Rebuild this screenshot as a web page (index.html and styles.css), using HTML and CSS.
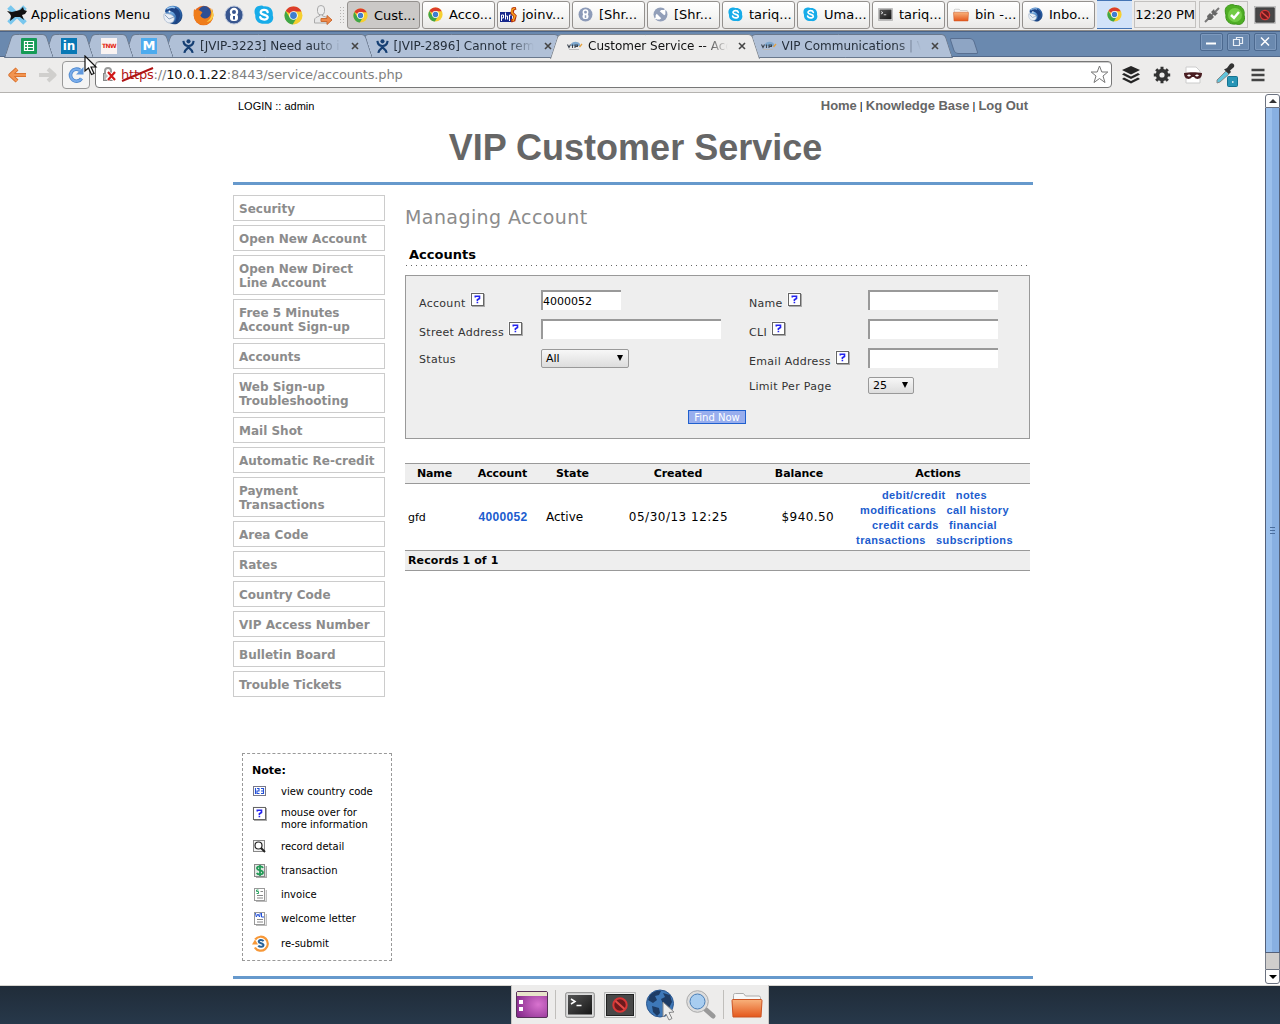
FILE: index.html
```html
<!DOCTYPE html>
<html lang="en">
<head>
<meta charset="utf-8">
<title>Customer Service -- Accounts</title>
<link rel="stylesheet" href="styles.css">
</head>
<body>
<svg class="defs" width="0" height="0" aria-hidden="true">
  <defs>
    <radialGradient id="blueBall" cx=".4" cy=".3" r=".8"><stop offset="0" stop-color="#7fb6ea"/><stop offset=".6" stop-color="#2a62a8"/><stop offset="1" stop-color="#173a70"/></radialGradient>
    <linearGradient id="orangeG" x1="0" y1="0" x2="0" y2="1"><stop offset="0" stop-color="#f8b27c"/><stop offset="1" stop-color="#e4571c"/></linearGradient>
    <radialGradient id="purpleG" cx=".7" cy=".5" r=".8"><stop offset="0" stop-color="#d873cf"/><stop offset="1" stop-color="#832789"/></radialGradient>
    <linearGradient id="darkG" x1="0" y1="0" x2="1" y2="1"><stop offset="0" stop-color="#555"/><stop offset="1" stop-color="#161616"/></linearGradient>
  </defs>
  <symbol id="chrome" viewBox="0 0 18 18">
    <circle cx="9" cy="9" r="8.5" fill="#f6cf2f"/>
    <path d="M9 9 1.6 4.8A8.5 8.5 0 0 1 16.5 5.2H9Z" fill="#dc3d2c"/>
    <path d="M1.6 4.8A8.5 8.5 0 0 0 8.2 17.5L11.8 11.5 9 9 5.5 11Z" fill="#3fa648"/>
    <circle cx="9" cy="9" r="4.1" fill="#fff"/><circle cx="9" cy="9" r="3.2" fill="#3f7ed0"/>
  </symbol>
  <symbol id="bird" viewBox="0 0 20 20">
    <path d="M2 5C5 0 13-1 17 4c4 5 3 12-3 15-4 1-8 0-10-4Z" fill="url(#blueBall)"/>
    <path d="M9 2c5 0 9 4 8 9-1 4-3 7-6 8 3-4 3-8 0-11-2-2-5-2-9-1 1-3 4-5 7-5Z" fill="#1d4283"/>
    <path d="M1 9c3-1 8 0 10 3 1 3-1 6-4 6-4 0-7-4-6-9Z" fill="#e9eef5" stroke="#a3b4cb" stroke-width=".7"/><path d="m2 10 4 4 5-2" fill="none" stroke="#8fa5c3"/>
    <path d="M4 4c3-2 6-2 8-1" fill="none" stroke="#9cc9f3" stroke-width="1.300"/>
    <circle cx="6.500" cy="6.500" r="1" fill="#fff"/>
  </symbol>
  <symbol id="firefox" viewBox="0 0 20 20">
    <circle cx="10" cy="10" r="9.300" fill="#e8691c"/>
    <circle cx="11" cy="7" r="6" fill="#2d4f94"/>
    <path d="M1 4c2 1 3 1 5 1l3 2-2 3c2 4 7 4 10 0l1-7c3 7 1 14-6 16C4 20-1 13 1 4Z" fill="#ef7d1b"/>
    <path d="M16 3c3 4 2 10-3 13 4 0 6-3 6.500-6 0-3-1-5-3.500-7Z" fill="#f8ce45"/>
  </symbol>
  <symbol id="keyhole" viewBox="0 0 20 20">
    <circle cx="10" cy="10" r="9" fill="#38568f" stroke="#b8c4da"/>
    <circle cx="10" cy="7" r="3.100" fill="none" stroke="#fff" stroke-width="2.200"/><rect x="6" y="9" width="8" height="7" rx="3" fill="#fff"/><rect x="9" y="11" width="2" height="3.500" fill="#38568f"/>
  </symbol>
  <symbol id="greykey" viewBox="0 0 20 20">
    <circle cx="10" cy="10" r="9.300" fill="#8d9bb8"/>
    <circle cx="10" cy="7" r="2.900" fill="none" stroke="#fff" stroke-width="2"/><rect x="6" y="9" width="8" height="7" rx="3" fill="#fff"/><rect x="9" y="11" width="2" height="3.500" fill="#8d9bb8"/>
  </symbol>
  <symbol id="plugball" viewBox="0 0 20 20">
    <circle cx="10" cy="10" r="9.300" fill="#929fb9"/><path d="m3 16 4-4M13 7l4-4" stroke="#fff" stroke-width="1.800"/><path d="m5 9 6 6-2 1.500H5L3.500 14V11ZM9 5.500 11 4h4l1.500 1.500v4L15 11Z" fill="#fff"/>
  </symbol>
  <symbol id="skype" viewBox="0 0 20 20">
    <path d="M6 .8a5 5 0 0 1 4 .6c6-.5 9.500 3.600 8.700 8.800 2 5-2 9.500-7 8.500C5 19.500.8 15.500 1.300 10-.8 5.500 1.500 1 6 .8Z" fill="#17ace9"/>
    <path d="M13.700 7.200C13 4 6.600 4.200 6.700 7.300c.1 3.200 7 2 7 5 0 3-6.800 3-7.500-.2" fill="none" stroke="#fff" stroke-width="2.300" stroke-linecap="round"/>
  </symbol>
  <symbol id="terminal" viewBox="0 0 30 26">
    <rect x=".7" y=".7" width="28.600" height="24.600" rx="1.500" fill="#ddd" stroke="#888"/><rect x="3" y="3" width="24" height="19.500" fill="url(#darkG)"/><path d="m6 7 4 2.500L6 12M11.500 13.500h5" stroke="#fff" stroke-width="1.500" fill="none"/>
  </symbol>
  <symbol id="blocked" viewBox="0 0 32 26">
    <rect x=".7" y=".7" width="30.600" height="24.600" fill="#fff" stroke="#aaa"/><rect x="2.500" y="2.500" width="27" height="21" fill="#484848" stroke="#222"/>
    <circle cx="16" cy="13" r="6.700" fill="#6c1a1d" stroke="#d93636" stroke-width="2"/><path d="m11.500 9 9 8" stroke="#e34a46" stroke-width="2.200"/>
  </symbol>
  <symbol id="folder" viewBox="0 0 32 26">
    <path d="M2.500 10V3.500C2.500 2 3 1.500 4.500 1.500h8l2 2.500h14l1 1.500V10Z" fill="#f8f8f8" stroke="#aaa"/><path d="M1 8.500q0-1 1-1h28q1 0 1 1L30 25H2Z" fill="url(#orangeG)" stroke="#cc5424"/>
  </symbol>
  <symbol id="jira" viewBox="0 0 14 16">
    <circle cx="7" cy="3" r="2.200" fill="#163f73"/><path d="M1.500 2.500C2 7 5 8 7 8s5-1 5.500-5.500M2.500 15.500C3 11 8 10 9.500 6.500M11.500 15.500C11 11 6 10 4.500 6.500" fill="none" stroke="#163f73" stroke-width="2.300"/>
  </symbol>
  <symbol id="vip" viewBox="0 0 16 10">
    <path d="M4 3C6 0 11 0 13 3v2H4Z" fill="#7fa9cf"/><path d="m.5 3.500 1.500 3 1.500-3M5.500 3.500v3.500M8 7V4h2.500v1.500H8" fill="none" stroke="#3b444f" stroke-width="1.100"/><path d="m12.500 6 2.500-3" stroke="#e5a13f" stroke-width="1.300"/><path d="M2 8.500h10" stroke="#bbb"/>
  </symbol>
  <symbol id="help" viewBox="0 0 15 15">
    <rect width="14" height="14" fill="#f8f8f8"/><path d="M2 14.300h12.300V2" fill="none" stroke="#aaa" stroke-width="1.400"/>
    <rect x="1.500" y="1.500" width="12" height="12" fill="#fff" stroke="#666"/><path d="M5.300 5.600V4.300h4.200v2.200L7.400 7.700v1.200M7.400 9.700v1.600" fill="none" stroke="#2424ef" stroke-width="1.600"/>
  </symbol>
  <symbol id="close" viewBox="0 0 8 8"><path d="m1 1 6 6M7 1 1 7" stroke="#454545" stroke-width="1.600"/></symbol>
</svg>

<header class="panel">
  <div class="menu">
    <svg width="22" height="22" viewBox="0 0 22 22"><path d="m3 3 16 16M19 3 3 19" stroke="#79c7ee" stroke-width="5"/><path d="m1 7 5 1 8-2 3-3 1 3 3 1-2 3-3 1 2 5-4-3H9l-5 4 1-5-1-2Z" fill="#111"/></svg>
    <span>Applications Menu</span>
  </div>
  <div class="launchers">
    <svg width="20" height="20"><use href="#bird"/></svg>
    <svg width="21" height="21"><use href="#firefox"/></svg>
    <svg width="20" height="20"><use href="#keyhole"/></svg>
    <svg width="20" height="20"><use href="#skype"/></svg>
    <svg width="19" height="19"><use href="#chrome"/></svg>
    <svg width="20" height="20" viewBox="0 0 20 20"><path d="M1.500 18v-3c0-2 2-3 5-4V9h3v2c4 1 6 2 6 4v3Z" fill="#e8e8e8" stroke="#aaa"/><rect x="4.500" y=".5" width="7" height="9.500" rx="3.500" fill="#eee" stroke="#aaa"/><path d="M8 13.500h6V10.500l5 4.500-5 4.500v-3H8Z" fill="#ef8848" stroke="#c96b33"/></svg>
  </div>
  <i class="grip"></i>
  <nav class="tasks">
    <div class="task on"><svg width="15" height="15"><use href="#chrome"/></svg>Cust...</div>
    <div class="task"><svg width="15" height="15"><use href="#chrome"/></svg>Acco...</div>
    <div class="task wide"><svg width="17" height="16" viewBox="0 0 17 16"><path d="M0 5h12v10H0Z" fill="#18298c"/><path d="M1.500 14V8h2v3h-2M5.500 5.500v7M5.500 9h2v3.500M9.500 14V8h2" stroke="#fff" fill="none"/><path d="m16 1-3 1-1 4 3 3-1 4-3 1" fill="none" stroke="#b5310f" stroke-width="3.200"/><path d="m15 1-3 2v3l3 3-2 5" fill="none" stroke="#f9a51b" stroke-width="1.500"/></svg>joinv...</div>
    <div class="task"><svg width="15" height="15"><use href="#greykey"/></svg>[Shr...</div>
    <div class="task"><svg width="15" height="15"><use href="#plugball"/></svg>[Shr...</div>
    <div class="task"><svg width="15" height="15"><use href="#skype"/></svg>tariq...</div>
    <div class="task"><svg width="15" height="15"><use href="#skype"/></svg>Uma...</div>
    <div class="task"><svg width="15" height="13"><use href="#terminal"/></svg>tariq...</div>
    <div class="task"><svg width="16" height="14"><use href="#folder"/></svg>bin -...</div>
    <div class="task"><svg width="15" height="15"><use href="#bird"/></svg>Inbo...</div>
  </nav>
  <div class="pager"><svg width="15" height="15"><use href="#chrome"/></svg></div>
  <div class="clock">12:20 PM</div>
  <div class="tray">
    <svg width="18" height="18" viewBox="0 0 18 18"><path d="M2 16 16 2" stroke="#777" stroke-width="2"/><path d="m4 10 3-3 4 4-3 3H5ZM8 6l3-3 1 3 3 1-3 3Z" fill="#666"/></svg>
    <svg width="22" height="22" viewBox="0 0 22 22"><path d="M6 1c2-1 4 0 5 .5C18 1 21 6 20 11c2 6-2 11-8 9C5 21 1 16 2 11 0 5 2 2 6 1Z" fill="#4fae25" stroke="#3b951a"/><circle cx="11" cy="11" r="7" fill="#72cc46"/><path d="m7 11 3 3 5-6" fill="none" stroke="#fff" stroke-width="2.500"/></svg>
  </div>
  <svg class="last" width="22" height="18" viewBox="0 0 32 26"><use href="#blocked"/></svg>
</header>

<div class="tabstrip">
  <div class="tab pin t1"><svg width="16" height="16"><rect width="16" height="16" rx="1" fill="#159b56"/><path d="M3.500 3.500h9v9h-9ZM3.500 6.500h9M3.500 9.500h9M6.500 3.500v9" fill="none" stroke="#fff" stroke-width="1.200"/></svg></div>
  <div class="tab pin t2"><div class="fav li">in</div></div>
  <div class="tab pin t3"><div class="fav tnw">TNW</div></div>
  <div class="tab pin t4"><div class="fav em">M</div></div>
  <div class="tab jr t5"><svg width="13" height="16"><use href="#jira"/></svg><span>[JVIP-3223] Need auto i</span><svg width="8" height="8"><use href="#close"/></svg></div>
  <div class="tab jr t6"><svg width="13" height="16"><use href="#jira"/></svg><span>[JVIP-2896] Cannot rem</span><svg width="8" height="8"><use href="#close"/></svg></div>
  <div class="tab active"><svg width="16" height="10"><use href="#vip"/></svg><span>Customer Service -- Acc</span><svg width="8" height="8"><use href="#close"/></svg></div>
  <div class="tab t8"><svg width="16" height="10"><use href="#vip"/></svg><span>VIP Communications | V</span><svg width="8" height="8"><use href="#close"/></svg></div>
  <i class="newtab"></i>
  <div class="wm">
    <b><svg width="20" height="15"><path d="M5 9.500h10" stroke="#fff" stroke-width="2"/></svg></b>
    <b><svg width="20" height="15"><path d="M5.500 5.500h6v6h-6ZM8.500 5V3.500h6v6h-3" fill="none" stroke="#e8eef6" stroke-width="1.200"/></svg></b>
    <b><svg width="20" height="15"><path d="m6 3.500 8 8M14 3.500l-8 8" stroke="#fff" stroke-width="1.500"/></svg></b>
  </div>
</div>

<div class="toolbar">
  <svg width="20" height="16" viewBox="0 0 20 16"><path d="M9 2 2.500 8 9 14M3 8h15" fill="none" stroke="#d36b29" stroke-width="4.200" stroke-linejoin="round"/><path d="M9 2 2.500 8 9 14M3 8h15" fill="none" stroke="#f29450" stroke-width="2.400"/></svg>
  <svg class="fwd" width="20" height="16" viewBox="0 0 20 16"><path d="m11 2 6.500 6-6.500 6M17 8H2" fill="none" stroke="#d0cfcd" stroke-width="4" stroke-linejoin="round"/></svg>
  <div class="reload"><svg width="18" height="18" viewBox="0 0 18 18"><path d="M14.500 12.500A6 6 0 1 1 13 4.300" fill="none" stroke="#4a85cd" stroke-width="3.600"/><path d="M14.500 12.500A6 6 0 1 1 13 4.300" fill="none" stroke="#78aceb" stroke-width="2"/><path d="M16.500 1v7.500H9Z" fill="#5f98dd"/></svg></div>
  <div class="url">
    <svg width="16" height="17" viewBox="0 0 16 17"><path d="M3 8V5c0-4 6-4 6 0v3" fill="none" stroke="#999" stroke-width="2"/><rect x="1.500" y="7.500" width="9" height="7" fill="#bbb" stroke="#888"/><path d="m5 6 8 8M13 6l-8 8" stroke="#fff" stroke-width="4"/><path d="m6 6 7 8M13 6l-7 8" stroke="#d01818" stroke-width="2.200"/></svg>
    <span class="addr"><span class="scheme">https<svg class="slash" width="33" height="16"><path d="M1 14 32 1" stroke="#b01515" stroke-width="2"/></svg></span>://<em>10.0.1.22</em>:8443/service/accounts.php</span>
    <svg width="19" height="19" viewBox="0 0 19 19"><path d="m9.500 1 2.300 6h6l-4.800 4 2 6.500-5.500-4-5.500 4 2-6.500-4.800-4h6Z" fill="#fff" stroke="#777"/></svg>
  </div>
  <div class="exts">
    <svg width="18" height="18" viewBox="0 0 18 18" fill="#252525"><path d="m9 0 9 4-9 4.500L0 4ZM2 7l7 3.500L16 7l2 1.500L9 13 0 8.500ZM2 11.500 9 15l7-3.500 2 1.500-9 4.500L0 13Z"/></svg>
    <svg width="18" height="18" viewBox="0 0 18 18"><circle cx="9" cy="9" r="4.400" fill="none" stroke="#333" stroke-width="3.600"/><path d="M9 .8v3M9 14.200v3M.8 9h3M14.200 9h3M3.200 3.200l2 2M12.800 12.800l2 2M14.800 3.200l-2 2M5.200 12.800l-2 2" stroke="#333" stroke-width="3"/></svg>
    <svg width="18" height="18" viewBox="0 0 18 18"><path d="M2 1h10l4 4v12H2Z" fill="#fff" stroke="#ccc"/><path d="M0 7c5-1 13-1 18 0 0 7-6 7-8 4H8C6 14 0 14 0 7Z" fill="#4a1e22"/><path d="M3 9.500q2-2 4 0-2 2-4 0M11 9.500q2-2 4 0-2 2-4 0" fill="#fff"/></svg>
    <svg width="23" height="24" viewBox="0 0 23 24"><path d="m2 17 9-9 3 3-9 8-3 1Z" fill="#61c4dc" stroke="#888"/><path d="m10 6 2-1 3-4q2-1.500 3.500 0t0 3.500L15 7.500 16 9l-2 2-5-4.500Z" fill="#333"/><rect x="12.500" y="13.500" width="10" height="10" rx="1" fill="#2795b6" stroke="#157391"/><path d="M17 19h1.500" stroke="#fff" stroke-width="1.500"/></svg>
    <svg width="14" height="14"><path d="M.5 2h13M.5 7h13M.5 12h13" stroke="#444" stroke-width="2.600"/></svg>
  </div>
</div>

<div class="viewport">
  <div class="page">
    <div class="top"><span class="login">LOGIN :: admin</span><span class="links"><a>Home</a> | <a>Knowledge Base</a> | <a>Log Out</a></span></div>
    <h1>VIP Customer Service</h1>
    <div class="columns">
      <aside>
        <ul class="nav">
          <li>Security</li><li>Open New Account</li><li>Open New Direct<br>Line Account</li><li>Free 5 Minutes<br>Account Sign-up</li><li>Accounts</li><li>Web Sign-up<br>Troubleshooting</li><li>Mail Shot</li><li>Automatic Re-credit</li><li>Payment<br>Transactions</li><li>Area Code</li><li>Rates</li><li>Country Code</li><li>VIP Access Number</li><li>Bulletin Board</li><li>Trouble Tickets</li>
        </ul>
        <div class="note">
          <strong>Note:</strong>
          <div class="nrow r1"><svg width="14" height="10" viewBox="0 0 14 10"><rect x=".5" y=".5" width="12" height="9" fill="#fff" stroke="#778"/><path d="M2.500 2v6M4 2.500h2v2.500H4v2.500h2.500M8 2.500h2.500v5H8M8 5h2" fill="none" stroke="#2350d8" stroke-width="1.100"/></svg>view country code</div>
          <div class="nrow r2"><svg width="15" height="15"><use href="#help"/></svg>mouse over for<br>more information</div>
          <div class="nrow"><svg width="13" height="13" viewBox="0 0 13 13"><rect x=".5" y=".5" width="11" height="11" fill="#f3f3f3" stroke="#888"/><circle cx="5.500" cy="5.500" r="3.500" fill="#fff" stroke="#222" stroke-width="1.200"/><path d="m8 8 4 4" stroke="#222" stroke-width="2"/></svg>record detail</div>
          <div class="nrow"><svg width="14" height="14" viewBox="0 0 14 14"><path d="M3 13.300h10.300V2" stroke="#aaa" stroke-width="1.500" fill="none"/><rect x="1.500" y=".5" width="10" height="12" fill="#e4e8e5" stroke="#888"/><path d="M10 4C9 1.500 3.500 2 4 4.500s6 1.500 6 4-5 2.500-6.300.5M7 1v11" fill="none" stroke="#249b58" stroke-width="1.800"/></svg>transaction</div>
          <div class="nrow"><svg width="14" height="14" viewBox="0 0 14 14"><path d="M3 13.300h10.300V2" stroke="#bbb" stroke-width="1.200" fill="none"/><rect x="1.500" y=".5" width="10" height="12" fill="#fff" stroke="#999"/><path d="M5.500 2H3.500v1.500h2v2h-2" fill="none" stroke="#30a565"/><path d="M7.500 3.500H10M4 7.500h6M4 10h6" stroke="#888"/></svg>invoice</div>
          <div class="nrow"><svg width="14" height="14" viewBox="0 0 14 14"><path d="M3 13.300h10.300V2" stroke="#bbb" stroke-width="1.200" fill="none"/><rect x="1.500" y=".5" width="10" height="12" fill="#fff" stroke="#999"/><path d="m2.500 1 .8 4L5 2l1.500 3 .8-4M8.500 1v4H11" fill="none" stroke="#2350d8"/><path d="M4 7.500h6M4 10h6" stroke="#888"/></svg>welcome letter</div>
          <div class="nrow last-row"><svg width="17" height="17" viewBox="0 0 17 17"><path d="M3.200 4.500a7 7 0 1 1-.3 8" fill="none" stroke="#f79838" stroke-width="2.200"/><path d="M0 9.500 3 4.500l3 5Z" fill="#f79838"/><path d="M11.500 6.200C10.500 4.500 6.500 4.600 6.700 6.700c.2 2 4.800 1 4.800 3.400 0 2.200-4.200 2-5.200.5" fill="none" stroke="#286299" stroke-width="2"/></svg>re-submit</div>
        </div>
      </aside>
      <main>
        <h2>Managing Account</h2>
        <h3>Accounts</h3>
        <form class="search">
          <div class="fields">
            <label>Account <svg width="15" height="15"><use href="#help"/></svg></label><input class="w80" value="4000052">
            <label>Name <svg width="15" height="15"><use href="#help"/></svg></label><input class="w130">
            <label>Street Address <svg width="15" height="15"><use href="#help"/></svg></label><input class="w180">
            <label>CLI <svg width="15" height="15"><use href="#help"/></svg></label><input class="w130">
            <label class="plain">Status</label><div class="sel s1"><span>All</span><i></i></div>
            <label>Email Address <svg width="15" height="15"><use href="#help"/></svg></label><input class="w130">
            <label class="plain c3">Limit Per Page</label><div class="sel s2"><span>25</span><i></i></div>
          </div>
          <button type="button">Find Now</button>
        </form>
        <table>
          <colgroup><col class="c-name"><col class="c-acct"><col class="c-state"><col class="c-date"><col class="c-bal"><col></colgroup>
          <thead><tr><th>Name</th><th>Account</th><th>State</th><th>Created</th><th>Balance</th><th>Actions</th></tr></thead>
          <tbody><tr><td class="small">gfd</td><td class="acct"><a>4000052</a></td><td class="state">Active</td><td class="date">05/30/13 12:25</td><td class="bal">$940.50</td><td class="actions">debit/credit &nbsp; notes<br>modifications &nbsp; call history<br>credit cards &nbsp; financial<br>transactions &nbsp; subscriptions</td></tr></tbody>
          <tfoot><tr><td colspan="6">Records 1 of 1</td></tr></tfoot>
        </table>
      </main>
    </div>
  </div>
  <div class="scroll"><i class="btn up"></i><i class="thumb"></i><i class="trough"></i><i class="btn down"></i></div>
</div>

<footer class="desktop">
  <div class="dock">
    <svg width="32" height="27" viewBox="0 0 32 27"><rect x=".5" y=".5" width="31" height="26" rx="1.500" fill="url(#purpleG)" stroke="#573158"/><path d="M1 1h30v4H1Z" fill="#e8e4cb"/><path d="M3 9h4v4H3ZM3 16h4v4H3Z" fill="#fff"/></svg>
    <i></i>
    <svg width="30" height="26"><use href="#terminal"/></svg>
    <svg width="32" height="26"><use href="#blocked"/></svg>
    <svg width="32" height="32" viewBox="0 0 32 32"><circle cx="15" cy="14.500" r="13.500" fill="#3e78b8" stroke="#2a568f"/><path d="M5 6c4-4 8-5 11-4l-2 4-4 1 2 4-4 3-5-3ZM18 4l7 2 2 7-3 6-6-4-2-5 4-2ZM7 17l7 2 1 5-3 3-4-4Z" fill="#1e3c65"/><path d="m18 13 11 10-5 .5 3 6-3 1.500-3-6-3 3Z" fill="#eee" stroke="#888"/></svg>
    <svg width="30" height="30" viewBox="0 0 30 30"><path d="m18 18 9 8" stroke="#999" stroke-width="5" stroke-linecap="round"/><circle cx="11.500" cy="11.500" r="9" fill="#a8cdf0" stroke="#ddd" stroke-width="3.500"/><circle cx="11.500" cy="11.500" r="10.800" fill="none" stroke="#aaa"/><circle cx="11.500" cy="11.500" r="7.500" fill="none" stroke="#467db8"/></svg>
    <i></i>
    <svg class="fold" width="32" height="26"><use href="#folder"/></svg>
  </div>
</footer>
<svg class="cursor" width="14" height="21" viewBox="0 0 14 21"><path d="M1 1v15l3.500-3 3 6.500 2.500-1-3-6.500h5Z" fill="#fff" stroke="#111" stroke-width="1.200"/></svg>
</body>
</html>
```
FILE: styles.css
```css
* { box-sizing: border-box; }
body { margin: 0; width: 1280px; height: 1024px; overflow: hidden; display: flex; flex-direction: column; background: #fff; font-family: "DejaVu Sans", Verdana, sans-serif; color: #000; }
svg { display: block; flex: none; }
.defs { position: absolute; }

.panel { height: 31px; flex: none; display: flex; align-items: flex-start; background: #edeceb; border-bottom: 1px solid #8e8b88; font-size: 13px; }
.menu { display: flex; align-items: center; gap: 3px; width: 162px; height: 29px; padding-left: 6px; white-space: nowrap; }
.launchers { display: flex; align-items: center; justify-content: space-between; width: 171px; height: 30px; padding-left: 1px; }
.grip { width: 6px; height: 18px; margin: 6px 2px 0 6px; background: radial-gradient(circle, #b5b3b1 1px, transparent 1px) 0 0 / 3px 3px; }
.tasks { display: flex; gap: 2px; }
.task { width: 73px; height: 28px; margin-top: 1px; display: flex; align-items: center; gap: 6px; padding-left: 5px; padding-bottom: 1px; border: 1px solid #94918e; border-radius: 3px; background: linear-gradient(#fff, #f6f6f5 50%, #e9e8e6); white-space: nowrap; overflow: hidden; }
.task.wide { gap: 5px; padding-left: 2px; }
.task.on { background: #cbc9c7; padding-bottom: 0; }
.pager { width: 35px; height: 29px; margin-left: 2px; display: flex; align-items: center; justify-content: center; background: #d2e3f9; border: solid #4575b5; border-width: 1px 0; }
.clock { width: 62px; height: 27px; margin: 1px 0 0 2px; border: 1px solid #c3c1bf; line-height: 25px; text-align: center; white-space: nowrap; letter-spacing: -.15px; }
.tray { width: 49px; height: 27px; margin: 1px 0 0 3px; border: 1px solid #c3c1bf; display: flex; align-items: center; gap: 3px; padding-left: 3px; }
.last { margin: 6px 0 0 6px; }

.tabstrip { height: 26px; flex: none; display: flex; align-items: flex-start; padding: 2px 5px 0 4px; background: #6a89af; border-top: 1px solid #4a6489; position: relative; box-shadow: inset 0 -1px #53698a; font-size: 12px; color: #26303c; z-index: 1; }
.tab { position: relative; isolation: isolate; width: 209.500px; height: 24px; margin-right: -16px; padding: 0 14px 0 17px; display: flex; align-items: center; flex: none; }
.tab::before, .tab::after { content: ""; position: absolute; z-index: -1; top: 0; bottom: 0; background: #b0c0d7; border: 1px solid #69788d; }
.tab::before { left: 4px; right: calc(50% - 6px); border-right: 0; border-radius: 4px 0 0 0; transform: skewX(-18deg); }
.tab::after { left: calc(50% - 6px); right: 4px; border-left: 0; border-radius: 0 4px 0 0; transform: skewX(18deg); }
.jr { padding-left: 19px; }
.pin { width: 50px; margin-right: -10px; padding: 0; justify-content: center; }
.t1 { z-index: 9; } .t2 { z-index: 8; } .t3 { z-index: 7; } .t4 { z-index: 6; margin-right: -11px; } .t5 { z-index: 5; } .t6 { z-index: 4; } .t8 { z-index: 2; }
.active { z-index: 10; height: 25px; color: #111; padding-bottom: 1px; }
.tab.active::before, .tab.active::after { background: #edeceb; border-bottom: 0; border-color: #7f8791; }
.tab span { flex: 1; overflow: hidden; white-space: nowrap; margin-left: 5px; margin-right: 10px; font-size: 12px; -webkit-mask-image: linear-gradient(90deg, #000 82%, transparent); mask-image: linear-gradient(90deg, #000 82%, transparent); }
.fav { width: 16px; height: 16px; line-height: 16px; text-align: center; color: #fff; font-weight: bold; }
.li { background: #0878b5; font-size: 12px; }
.tnw { background: #f9f3f2; color: #e32615; font-size: 6px; letter-spacing: -.5px; }
.em { background: #4cabee; font-size: 13px; }
.newtab { width: 24px; height: 16px; margin: 4px 0 0 15px; background: #8ea5c4; border: 1px solid #586f91; border-radius: 2px 4px 2px 4px; transform: skewX(18deg); }
.wm { display: flex; gap: 4px; margin: -1px -2px 0 auto; }
.wm b { width: 23px; height: 18px; border: 1px solid #4c698f; border-radius: 2px; box-shadow: inset 0 0 0 1px #7d99bd; }

.toolbar { height: 36px; flex: none; display: flex; align-items: center; padding: 0 0 0 8px; background: #edeceb; border-bottom: 1px solid #b5b3b0; }
.fwd { margin-left: 9px; }
.reload { width: 28px; height: 28px; margin-left: 5px; display: flex; align-items: center; justify-content: center; border: 1px solid #999; border-radius: 4px; background: #f4f4f4; }
.url { width: 1017px; height: 27px; margin-left: 5px; display: flex; align-items: center; border: 1px solid #777; border-radius: 4px; background: #fff; box-shadow: inset 0 1px #ccc; padding: 0 2px 0 6px; }
.addr { margin-left: 3px; flex: 1; font-size: 13px; letter-spacing: -.17px; color: #808080; white-space: nowrap; }
.addr em { font-style: normal; color: #111; }
.scheme { position: relative; color: #b01515; }
.slash { position: absolute; left: 0; top: 0; }
.exts { display: flex; align-items: center; margin-left: 10px; gap: 13px; }

.viewport { height: 892px; flex: none; display: flex; justify-content: flex-end; background: #fff; }
.page { width: 800px; margin-right: 232px; height: 886px; border-bottom: 3px solid #69c; }
.top { height: 28px; padding: 5px 5px 0; display: flex; justify-content: space-between; font: 11px/16px "Liberation Sans", Arial, sans-serif; }
.links a { font-weight: bold; font-size: 13px; color: #666; letter-spacing: -.03px; }
h1 { margin: 0; height: 64px; padding-left: 5px; border-bottom: 3px solid #69c; text-align: center; font: bold 36px/53px "Liberation Sans", Arial, sans-serif; color: #666; }
.columns { display: flex; padding-top: 10px; }
aside { width: 172px; }
.nav { list-style: none; margin: 0; padding: 0; width: 152px; display: flex; flex-direction: column; gap: 4px; }
.nav li { border: 1px solid #ccc; padding: 6px 5px 4px; font: bold 12px/14px "DejaVu Sans", Verdana, sans-serif; color: #8c8c8c; white-space: nowrap; }
.note { width: 150px; height: 208px; margin: 56px 0 0 9px; border: 1px dashed #999; padding: 10px 0 0 9px; font-size: 10px; line-height: 12px; }
.note strong { display: block; font-size: 11px; line-height: 14px; }
.nrow { position: relative; height: 24px; padding: 6px 0 0 29px; white-space: nowrap; }
.nrow svg { position: absolute; left: 1px; top: 5px; }
.nrow.r1 { height: 21px; padding-top: 8px; }
.nrow.r1 svg { top: 8px; }
.nrow.r2 { height: 36px; padding-top: 8px; }
.nrow.r2 svg { top: 7px; left: 0; }
.last-row { padding-top: 7px; }
.last-row svg { left: 0; top: 4px; }

main { width: 625px; }
h2 { margin: 10px 0 0; font-size: 19px; font-weight: normal; line-height: 24px; color: #8c8c8c; letter-spacing: .42px; }
h3 { margin: 17px 0 0; padding-left: 4px; height: 20px; font-size: 13px; line-height: 17px; background: repeating-linear-gradient(90deg, #666 0 1px, transparent 1px 5px) 1px 100% / 100% 1px no-repeat; }
.search { height: 164px; margin-top: 9px; padding: 14px 13px 0; background: #eee; border: 1px solid #999; }
.fields { display: grid; grid-template-columns: 122px 208px 119px 148px; grid-template-rows: 21px 21px 21px 17px; row-gap: 8px; }
label { display: flex; gap: 4px; font-size: 11px; line-height: 27px; letter-spacing: .3px; color: #333; white-space: nowrap; height: 21px; }
label svg { margin-top: 2px; }
label.plain { line-height: 23px; }
label.c3 { grid-column: 3; line-height: 19px; height: 17px; }
.fields input { height: 20px; padding: 0; border: 0 solid #999; border-width: 2px 0 0 2px; background: #fff; font: 11px "DejaVu Sans", sans-serif; }
.w80 { width: 80px; } .w130 { width: 130px; } .w180 { width: 180px; }
.sel { display: flex; align-items: center; justify-content: space-between; padding: 0 5px 0 4px; border: 1px solid #999; border-radius: 2px; background: linear-gradient(#f7f7f7, #ddd); font-size: 11px; }
.s1 { width: 88px; height: 19px; margin-top: 1px; }
.s2 { width: 46px; height: 17px; }
.sel i { border: solid transparent; border-width: 6px 3.500px 0; border-top-color: #000; margin-bottom: 2px; }
button { display: block; width: 58px; height: 14px; margin: 16px 0 0 269px; padding: 0; border: 1px solid #2060ce; background: #98aeee; color: #fff; font: 10px/11px "DejaVu Sans", sans-serif; white-space: nowrap; }

table { width: 625px; margin-top: 24px; border-collapse: separate; border-spacing: 0; table-layout: fixed; font-size: 11px; }
.c-name { width: 60px; } .c-acct { width: 76px; } .c-state { width: 64px; } .c-date { width: 147px; } .c-bal { width: 95px; }
th, tfoot td { height: 21px; padding: 1px 0 0; background: #eee; border: solid #999; border-width: 1px 0; line-height: 18px; font-weight: bold; }
th { letter-spacing: -.08px; padding-right: 1px; }
tfoot td { padding-left: 3px; letter-spacing: .1px; }
tbody td { height: 66px; padding: 0 3px; }
.acct { text-align: center; }
.acct a, .actions { color: #205cce; font: bold 11px/15px "Liberation Sans", Arial, sans-serif; letter-spacing: .36px; }
.acct a { font-size: 12px; letter-spacing: .3px; }
.state { padding-left: 5px; font-size: 12px; }
.date { text-align: center; font-size: 12px; white-space: nowrap; letter-spacing: .5px; }
.bal { text-align: right; font-size: 12px; padding-right: 13px; letter-spacing: .4px; }
tbody td.actions { text-align: center; white-space: nowrap; padding: 1px 8px 0 0; }

.scroll { width: 15px; height: 891px; padding-top: 1px; display: flex; flex-direction: column; }
.btn { height: 14px; border: 1px solid #6b7280; border-radius: 3px 3px 0 0; background: #fdfdfd; display: flex; align-items: center; justify-content: center; }
.btn::before { content: ""; border: solid transparent; border-width: 0 4px 4px; border-bottom-color: #333; }
.down { height: 15px; border-radius: 0 0 3px 3px; }
.down::before { border-width: 4px 4px 0; border-top-color: #000; }
.thumb { flex: 1; border: solid #54617a; border-width: 0 1px 1px; background: linear-gradient(90deg, #9bc0ec 50%, #88b0e2 50%); display: flex; align-items: center; justify-content: center; }
.thumb::before { content: ""; width: 5px; height: 7px; background: repeating-linear-gradient(#4b6e9d 0 1px, transparent 1px 3px); }
.trough { height: 16px; background: #d0cecc; border: solid #777d88; border-width: 0 1px; }

.desktop { height: 39px; flex: none; display: flex; justify-content: center; border-top: 1px solid #d7d5d0; background: linear-gradient(#202c39, #27384a); }
.dock { width: 258px; height: 41px; margin-top: -1px; background: #edeceb; border: solid #c8c6c3; border-width: 0 1px; display: flex; align-items: center; padding: 0 0 2px 4px; gap: 9px; }
.dock i { width: 1px; height: 29px; background: #c0bebb; margin: 0 0 0 -2px; }
.dock .fold { margin-left: -2px; }
.cursor { position: absolute; left: 84px; top: 55px; z-index: 20; }
```
